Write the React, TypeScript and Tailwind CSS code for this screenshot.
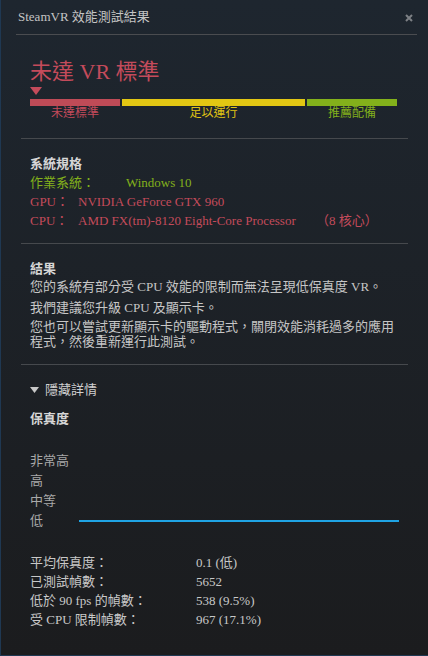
const font = { fontFamily: '"Liberation Serif", "Noto Sans CJK TC", serif' };

function Divider() {
  return <div className="h-px bg-[#46494d]" />;
}

export default function App() {
  return (
    <div
      className="flex h-[656px] w-[428px] flex-col border-b border-l border-[#1f3852] bg-linear-to-b from-[#1e262f] to-[#1b1c1e] text-[13px] text-[#c6c6c6]"
      style={font}
    >
      <header className="ml-[15px] mr-[11px] flex h-[35px] items-center justify-between border-b border-[#4a4c50] pl-[2px]">
        <span className="text-[13px] text-[#c4c4c4]">SteamVR 效能測試結果</span>
        <svg width="8" height="8" viewBox="0 0 8 8" className="mr-[4px] mt-[2px]">
          <path d="M1 1 L7 7 M7 1 L1 7" stroke="#7d8085" strokeWidth="2" />
        </svg>
      </header>

      <div className="mx-[20px] flex flex-col">
        <section className="px-[9px] pt-[24px] pb-[18px]">
          <div className="text-[22px] leading-[26px] text-[#c44b5b]">未達 VR 標準</div>
          <svg width="12" height="8" viewBox="0 0 12 8" className="mt-[2px] block">
            <path d="M0 0 H12 L6 8 Z" fill="#c44b5b" />
          </svg>
          <div className="mt-[4px] flex gap-[2px]">
            <div className="flex w-[90px] flex-col">
              <div className="h-[7px] bg-[#bf4b57]" />
              <span className="text-center text-[12px] leading-[14px] text-[#c44b5b]">未達標準</span>
            </div>
            <div className="flex w-[183px] flex-col">
              <div className="h-[7px] bg-[#e2c613]" />
              <span className="text-center text-[12px] leading-[14px] text-[#e2c613]">足以運行</span>
            </div>
            <div className="flex w-[90px] flex-col">
              <div className="h-[7px] bg-[#83b11b]" />
              <span className="text-center text-[12px] leading-[14px] text-[#83b11b]">推薦配備</span>
            </div>
          </div>
        </section>
        <Divider />

        <section className="px-[9px] pt-[15px] pb-[13px] leading-[19px]">
          <div className="font-bold text-[#d6d6d6]">系統規格</div>
          <div className="flex text-[#83b11b]">
            <span className="w-[96px]">作業系統：</span>
            <span>Windows 10</span>
          </div>
          <div className="flex text-[#c44b5b]">
            <span className="w-[48px]">GPU：</span>
            <span>NVIDIA GeForce GTX 960</span>
          </div>
          <div className="flex text-[#c44b5b]">
            <span className="w-[48px]">CPU：</span>
            <span className="w-[238px]">AMD FX(tm)-8120 Eight-Core Processor</span>
            <span>（8 核心）</span>
          </div>
        </section>
        <Divider />

        <section className="px-[9px] pt-[15px] pb-[15px]">
          <div className="font-bold leading-[19px] text-[#d6d6d6]">結果</div>
          <p className="mt-[1px] leading-[15px]">您的系統有部分受 CPU 效能的限制而無法呈現低保真度 VR。</p>
          <p className="mt-[6px] leading-[15px]">我們建議您升級 CPU 及顯示卡。</p>
          <p className="mt-[4px] leading-[15px]">您也可以嘗試更新顯示卡的驅動程式，關閉效能消耗過多的應用程式，然後重新運行此測試。</p>
        </section>
        <Divider />

        <section className="px-[9px] pt-[15px]">
          <div className="flex items-center gap-[6px] leading-[19px] text-[#cfcfcf]">
            <svg width="9" height="6" viewBox="0 0 9 6" className="mt-[1px]">
              <path d="M0 0 H9 L4.5 6 Z" fill="#c8c8c8" />
            </svg>
            <span>隱藏詳情</span>
          </div>
          <div className="mt-[10px] font-bold leading-[19px] text-[#d6d6d6]">保真度</div>
          <div className="mt-[23px] flex flex-col leading-[20px] text-[#a9a9a9]">
            <span>非常高</span>
            <span>高</span>
            <span>中等</span>
            <div className="flex items-center">
              <span className="w-[49px]">低</span>
              <div className="h-[2px] w-[321px] bg-[#1fa3e3]" />
            </div>
          </div>
          <div className="mt-[22px] flex flex-col leading-[19px] text-[#c8c8c8]">
            <div className="flex">
              <span className="w-[166px]">平均保真度：</span>
              <span>0.1 (低)</span>
            </div>
            <div className="flex">
              <span className="w-[166px]">已測試幀數：</span>
              <span>5652</span>
            </div>
            <div className="flex">
              <span className="w-[166px]">低於 90 fps 的幀數：</span>
              <span>538 (9.5%)</span>
            </div>
            <div className="flex">
              <span className="w-[166px]">受 CPU 限制幀數：</span>
              <span>967 (17.1%)</span>
            </div>
          </div>
        </section>
      </div>
    </div>
  );
}
